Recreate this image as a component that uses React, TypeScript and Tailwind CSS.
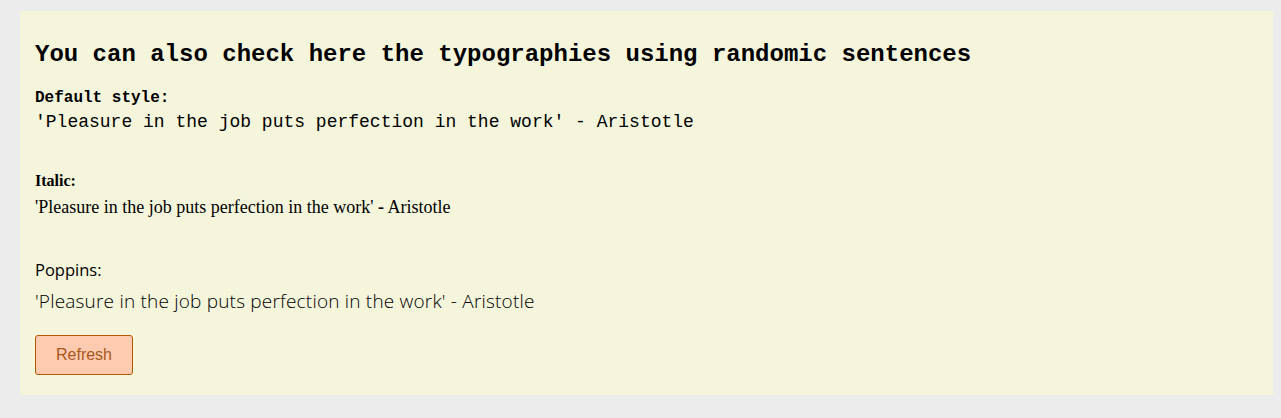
const quote = "'Pleasure in the job puts perfection in the work' - Aristotle";

const App = () => {
  return (
    <div className="min-h-screen bg-[#ececec] pl-[20px] pr-[8px] pt-[11px]">
      <div className="h-[384px] bg-[#f5f5dc] px-[15px] pt-[30px] pb-[20px]">
        <h2 className="text-[24px] leading-[28px] font-bold text-black font-['Courier_New','Liberation_Mono',monospace]">
          You can also check here the typographies using randomic sentences
        </h2>

        <div className="mt-[19px] font-['Courier_New','Liberation_Mono',monospace] text-black">
          <p className="text-[16px] leading-[20px] font-bold">Default style:</p>
          <p className="mt-[2px] text-[18px] leading-[24px]">{quote}</p>
        </div>

        <div className="mt-[37px] font-['Liberation_Serif',serif] text-black">
          <p className="text-[16px] leading-[20px] font-bold">Italic:</p>
          <p className="mt-[4px] text-[18px] leading-[24px]">
            'Pleasure in the job puts perfection in the work' <b>-</b> Aristotle
          </p>
        </div>

        <div className="mt-[41px] font-['Open_Sans',sans-serif] text-black">
          <p className="text-[16.5px] leading-[20px]">Poppins:</p>
          <p className="mt-[9px] text-[19px] leading-[24px] tracking-[0.2px] font-light">{quote}</p>
        </div>

        <button className="mt-[22px] h-[40px] w-[98px] rounded-[3px] border border-[#b35a00] bg-[#ffcbb0] text-[16px] text-[#a8581c] font-['Liberation_Sans',sans-serif]">
          Refresh
        </button>
      </div>
    </div>
  );
};

export default App;
